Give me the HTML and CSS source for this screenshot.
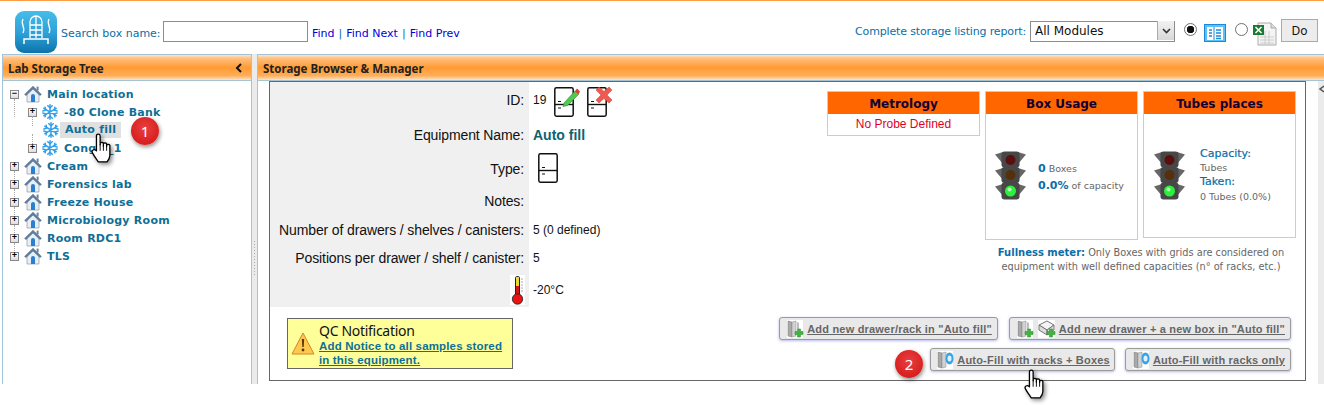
FILE: index.html
```html
<!DOCTYPE html>
<html lang="en">
<head>
<meta charset="utf-8">
<title>Storage Browser &amp; Manager</title>
<link rel="stylesheet" href="styles.css">
</head>
<body>
<svg class="defs" width="0" height="0" aria-hidden="true">
  <defs>
    <symbol id="house" viewBox="0 0 18 18">
      <path d="M3 8.500V17h12V8.500L9 3z" fill="#e8eef4" stroke="#8a9bad" stroke-width=".7"/>
      <path d="M.6 9.400 9 1.200l8.400 8.200-1.400 1.200L9 3.900 2 10.600z" fill="#5f7f9f" stroke="#3f5f7f" stroke-width=".5"/>
      <rect x="12.600" y="1.600" width="2" height="4" fill="#6f8399"/>
      <path d="M7 17v-6a2 2 0 0 1 4 0v6z" fill="#2a7fd0"/>
    </symbol>
    <symbol id="flake" viewBox="0 0 16 16">
      <g stroke="#2f9fe8" stroke-width="1.500" fill="none" stroke-linecap="round">
        <path d="M8 .8v14.400M1.800 4.400l12.400 7.200M14.200 4.400 1.800 11.600"/>
        <path d="M5.800 1.800 8 3.800l2.200-2M5.800 14.200 8 12.200l2.200 2M.9 7l2.800-.9-.6-2.900M15.100 9l-2.800.9.6 2.900M15.100 7l-2.800-.9.6-2.900M.9 9l2.800.9-.6 2.900"/>
      </g>
    </symbol>
    <symbol id="fridge" viewBox="0 0 20 30">
      <rect x=".8" y=".8" width="18.400" height="28.400" rx="1.600" fill="#fff" stroke="#111" stroke-width="1.500"/>
      <path d="M1 17.500h18" stroke="#111" stroke-width="1.400"/>
      <path d="M4 14.500h3M4 21h3" stroke="#111" stroke-width="1.200"/>
    </symbol>
    <symbol id="light" viewBox="0 0 31 49">
      <path d="M0 3.500 8 1v12zM31 3.500 23 1v12zM0 19.500 8 17v12zM31 19.500 23 17v12zM0 35.500 8 33v12zM31 35.500 23 33v12z" fill="#666"/>
      <rect x="6.500" y=".5" width="18" height="16" rx="3" fill="#474747"/>
      <rect x="6.500" y="16" width="18" height="16" rx="3" fill="#474747"/>
      <rect x="6.500" y="31.500" width="18" height="17" rx="3" fill="#474747"/>
      <circle cx="15.500" cy="9" r="5" fill="#5a0f0f"/>
      <circle cx="15.500" cy="24" r="5" fill="#54300c"/>
      <circle cx="15.500" cy="40" r="5.500" fill="#2df03a"/>
      <circle cx="14.500" cy="38.500" r="2" fill="#a8ffb0"/>
    </symbol>
    <symbol id="rack" viewBox="0 0 16 18">
      <path d="M1 1l4 1v15l-4-1z" fill="#a9a9a9" stroke="#777" stroke-width=".5"/>
      <path d="M5 2l4-1v15l-4 1z" fill="#d2d2d2" stroke="#888" stroke-width=".5"/>
      <path d="M10 2l2 1v6h-2z" fill="#bdbdbd"/>
    </symbol>
    <symbol id="plus" viewBox="0 0 10 10">
      <path d="M3.500 1h3v2.500H9v3H6.500V9h-3V6.500H1v-3h2.500z" fill="#3fb53f" stroke="#2a8a2a" stroke-width=".5"/>
    </symbol>
    <symbol id="hand" viewBox="0 0 26 34">
      <path d="M7 20V4a2 2 0 0 1 4 0v9.500-1.500a2 2 0 0 1 3.500 0v3-2.500a2 2 0 0 1 3.500 0v3-1.500a2 2 0 0 1 3.500 0V25c0 3-1.500 5-3 7H9c-2-3-4.500-6-6.500-10-1.200-2.500 1.800-4.500 4.500-2z" fill="#fff" stroke="#000" stroke-width="1.400" stroke-linejoin="round"/>
      <path d="M11 13v7M14.500 14.500V20M18 15.500V20" stroke="#000" stroke-width="1"/>
    </symbol>
  </defs>
</svg>

<header class="toolbar">
  <div class="logo">
    <svg viewBox="0 0 42 42" width="42" height="42" aria-hidden="true">
      <g fill="none" stroke="#fff">
        <path d="M15 27V11a6 6 0 0 1 12 0v16M15 14h12M15 19h12M15 24h12M21 5v22" stroke-width="1.300"/>
        <path d="M9 33v-5h24v5" stroke-width="1.500"/>
        <path d="M8 8c-3 5 3 8 0 14M34 8c-3 5 3 8 0 14" stroke-width="1.300"/>
      </g>
    </svg>
  </div>
  <div class="search">
    <label class="search-label" for="box-name">Search box name:</label>
    <input class="search-input" id="box-name" type="text">
    <nav class="find-links">
      <a href="#">Find</a><span class="sep">|</span><a href="#">Find Next</a><span class="sep">|</span><a href="#">Find Prev</a>
    </nav>
  </div>
  <div class="report">
    <span class="report-label">Complete storage listing report:</span>
    <div class="select-wrap">
      <select class="module-select"><option>All Modules</option></select>
      <span class="select-arrow"><svg width="9" height="6" viewBox="0 0 9 6"><path d="M1 1l3.500 3.500L8 1" fill="none" stroke="#333" stroke-width="1.600"/></svg></span>
    </div>
    <input class="radio" type="radio" name="fmt" checked>
    <svg class="list-icon" width="22" height="18" viewBox="0 0 22 18" aria-hidden="true">
      <rect x=".5" y=".5" width="21" height="17" fill="#5cc0fb" stroke="#1e88d8"/>
      <rect x="3" y="3" width="16" height="13" fill="#fff"/>
      <path d="M10 3v13" stroke="#1e88d8"/>
      <path d="M5 6h3M5 9h3M5 12h3M12 6h5M12 9h5M12 12h5M12 14.500h5" stroke="#1e88d8" stroke-width="1.300"/>
      <path d="M16 1.500h1M18.500 1.500h1" stroke="#f3b33a"/>
    </svg>
    <input class="radio radio-second" type="radio" name="fmt">
    <svg class="xls-icon" width="24" height="24" viewBox="0 0 24 24" aria-hidden="true">
      <path d="M5 1h13l5 5v17H5z" fill="#f4f4f4" stroke="#aaa"/>
      <path d="M18 1v5h5" fill="#ddd" stroke="#aaa"/>
      <path d="M7 15h14M7 18h14M7 21h14M12 9v13M16 9v13" stroke="#ccc"/>
      <rect x="0" y="3" width="11" height="10" fill="#1a7a33"/>
      <path d="M2.500 5l6 6M8.500 5l-6 6" stroke="#fff" stroke-width="1.500"/>
    </svg>
    <button class="do-btn" type="button">Do</button>
  </div>
</header>

<main class="panels">
  <section class="panel tree-panel">
    <h2 class="panel-head">Lab Storage Tree
      <svg class="collapse" width="8" height="10" viewBox="0 0 8 10" aria-hidden="true"><path d="M6 1 2 5l4 4" fill="none" stroke="#111" stroke-width="2"/></svg>
    </h2>
    <ul class="tree">
      <li class="node top open"><span class="exp">&minus;</span><svg class="ico-house"><use href="#house"/></svg><a>Main location</a></li>
      <li class="node sub"><span class="exp">+</span><svg class="ico-flake"><use href="#flake"/></svg><a>-80 Clone Bank</a></li>
      <li class="node sub leaf"><svg class="ico-flake"><use href="#flake"/></svg><a class="selected">Auto fill</a></li>
      <li class="node sub last"><span class="exp">+</span><svg class="ico-flake"><use href="#flake"/></svg><a>Congel_1</a></li>
      <li class="node top"><span class="exp">+</span><svg class="ico-house"><use href="#house"/></svg><a>Cream</a></li>
      <li class="node top"><span class="exp">+</span><svg class="ico-house"><use href="#house"/></svg><a>Forensics lab</a></li>
      <li class="node top"><span class="exp">+</span><svg class="ico-house"><use href="#house"/></svg><a>Freeze House</a></li>
      <li class="node top"><span class="exp">+</span><svg class="ico-house"><use href="#house"/></svg><a>Microbiology Room</a></li>
      <li class="node top"><span class="exp">+</span><svg class="ico-house"><use href="#house"/></svg><a>Room RDC1</a></li>
      <li class="node top"><span class="exp">+</span><svg class="ico-house"><use href="#house"/></svg><a>TLS</a></li>
    </ul>
  </section>

  <div class="splitter"><span class="grip"></span></div>

  <section class="panel browser-panel">
    <h2 class="panel-head">Storage Browser &amp; Manager</h2>
    <div class="browser-body">
      <div class="equipment">
        <div class="left-col">
          <div class="info">
            <div class="lbl">ID:</div>
            <div class="val">19
              <svg class="fridge fridge-edit" viewBox="0 0 26 30" width="26" height="30" aria-hidden="true">
                <use href="#fridge" width="20" height="30"/>
                <path d="M10 16 21 4l3.500 3.500-11 11-4.500 1z" fill="#4fc94f" stroke="#2a8a2a" stroke-width=".6"/>
                <path d="M21 4l2-2.500 3 3L24.500 7.500z" fill="#e23b3b"/>
              </svg>
              <svg class="fridge" viewBox="0 0 26 30" width="26" height="30" aria-hidden="true">
                <use href="#fridge" width="20" height="30"/>
                <path d="M9 3l3-3 5 4.500L22 0l3 3-5 5 5 5-3 3-5-4.500L12 16l-3-3 5-5z" fill="#ef5a50" stroke="#c83a30" stroke-width=".5"/>
              </svg>
            </div>
            <div class="lbl">Equipment Name:</div>
            <div class="val val-name">Auto fill</div>
            <div class="lbl">Type:</div>
            <div class="val"><svg class="fridge-type" width="20" height="30" aria-hidden="true"><use href="#fridge"/></svg></div>
            <div class="lbl">Notes:</div>
            <div class="val"></div>
            <div class="lbl">Number of drawers / shelves / canisters:</div>
            <div class="val">5 (0 defined)</div>
            <div class="lbl">Positions per drawer / shelf / canister:</div>
            <div class="val">5</div>
            <div class="lbl">
              <svg class="thermo" width="15" height="30" viewBox="0 0 15 30" aria-hidden="true">
                <rect width="15" height="30" fill="#fff"/>
                <rect x="5" y="1" width="5" height="20" rx="2.500" fill="#222"/>
                <rect x="6" y="2" width="3" height="9" fill="#e8d838"/>
                <rect x="6" y="11" width="3" height="11" fill="#d01818"/>
                <circle cx="7.500" cy="24" r="5.200" fill="#ee1111" stroke="#222" stroke-width=".8"/>
                <path d="M11 4h2M11 7h2M11 10h2M11 13h2M11 16h2" stroke="#aaa"/>
              </svg>
            </div>
            <div class="val">-20°C</div>
          </div>
          <div class="qc">
            <svg class="warn" width="24" height="23" viewBox="0 0 24 23" aria-hidden="true">
              <path d="M12 1 23 22H1z" fill="#fdc94f" stroke="#d9822b" stroke-width="1" stroke-linejoin="round"/>
              <path d="M10.800 7h2.400l-.5 8h-1.400z" fill="#5a3a00"/>
              <circle cx="12" cy="18" r="1.400" fill="#5a3a00"/>
            </svg>
            <div class="qc-text">
              <div class="qc-title">QC Notification</div>
              <a class="qc-link" href="#">Add Notice to all samples stored in this equipment.</a>
            </div>
          </div>
        </div>

        <div class="right-col">
          <div class="meters">
            <article class="meter">
              <h3 class="meter-head">Metrology</h3>
              <p class="no-probe">No Probe Defined</p>
            </article>
            <article class="meter meter-box">
              <h3 class="meter-head">Box Usage</h3>
              <div class="meter-body">
                <svg class="light" width="31" height="49" aria-hidden="true"><use href="#light"/></svg>
                <div class="usage">
                  <div><b>0</b> Boxes</div>
                  <div><b>0.0%</b> of capacity</div>
                </div>
              </div>
            </article>
            <article class="meter meter-tubes">
              <h3 class="meter-head">Tubes places</h3>
              <div class="meter-body tubes-body">
                <svg class="light" width="31" height="49" aria-hidden="true"><use href="#light"/></svg>
                <div class="tubes">
                  <div class="tubes-h">Capacity:</div>
                  <div>Tubes</div>
                  <div class="tubes-h">Taken:</div>
                  <div>0 Tubes (0.0%)</div>
                </div>
              </div>
            </article>
          </div>
          <p class="fullness"><b>Fullness meter:</b> Only Boxes with grids are considered on<br>equipment with well defined capacities (n° of racks, etc.)</p>
          <div class="actions">
            <div class="action-row">
              <a class="btn" href="#">
                <span class="btn-ico"><svg width="16" height="18"><use href="#rack"/></svg><svg class="btn-plus" width="10" height="10"><use href="#plus"/></svg></span>
                <span class="btn-text">Add new drawer/rack in "Auto fill"</span>
              </a>
              <a class="btn" href="#">
                <span class="btn-ico"><svg width="16" height="18"><use href="#rack"/></svg><svg class="btn-plus" width="10" height="10"><use href="#plus"/></svg></span>
                <span class="btn-ico box-ico">
                  <svg width="17" height="16" viewBox="0 0 17 16"><path d="M1 5l8-4 7 4-7 5z" fill="#f4f4f4" stroke="#777"/><path d="M1 5v5l8 5v-5zM16 5v5l-7 5v-5z" fill="#ddd" stroke="#777"/></svg>
                  <svg class="btn-plus" width="10" height="10"><use href="#plus"/></svg>
                </span>
                <span class="btn-text">Add new drawer + a new box in "Auto fill"</span>
              </a>
            </div>
            <div class="action-row row-two">
              <a class="btn btn-tight" href="#">
                <span class="btn-ico"><svg width="16" height="18"><use href="#rack"/></svg><svg class="btn-gear" width="9" height="13" viewBox="0 0 9 13"><ellipse cx="4.500" cy="6.500" rx="4" ry="6" fill="#36a4e6"/><ellipse cx="4.500" cy="6.500" rx="2" ry="3" fill="#dff2ff"/></svg></span>
                <span class="btn-text">Auto-Fill with racks + Boxes</span>
              </a>
              <a class="btn" href="#">
                <span class="btn-ico"><svg width="16" height="18"><use href="#rack"/></svg><svg class="btn-gear" width="9" height="13" viewBox="0 0 9 13"><ellipse cx="4.500" cy="6.500" rx="4" ry="6" fill="#36a4e6"/><ellipse cx="4.500" cy="6.500" rx="2" ry="3" fill="#dff2ff"/></svg></span>
                <span class="btn-text">Auto-Fill with racks only</span>
              </a>
            </div>
          </div>
        </div>
      </div>
      <div class="scroll-strip"><svg width="6" height="8" viewBox="0 0 6 8"><path d="M6 1 2 4l4 3" fill="none" stroke="#555" stroke-width="1.500"/></svg></div>
    </div>
  </section>
</main>

<span class="badge badge-one">1</span>
<span class="badge badge-two">2</span>
<svg class="cursor cursor-one" width="24" height="32" aria-hidden="true"><use href="#hand"/></svg>
<svg class="cursor cursor-two" width="24" height="32" aria-hidden="true"><use href="#hand"/></svg>
</body>
</html>
```

FILE: styles.css
```css
* { box-sizing: border-box; }
html, body { margin: 0; height: 405px; overflow: hidden; background: #fff; }
body { position: relative; font-family: "DejaVu Sans", Verdana, sans-serif; border-top: 1px solid #ff9c45; color: #111; }
.defs { position: absolute; }
h2, h3, p, ul { margin: 0; padding: 0; }
a { text-decoration: none; }

/* toolbar */
.toolbar { height: 53px; display: flex; align-items: flex-start; padding-left: 15px; }
.logo { width: 42px; height: 42px; margin-top: 10px; border-radius: 9px; background: linear-gradient(#45bde9, #2c9fd6 55%, #0d74aa); }
.search { display: flex; align-items: center; margin: 20px 0 0 4px; height: 21px; font-size: 11px; }
.search-label { color: #0a6ea8; width: 102px; white-space: nowrap; padding-top: 3px; }
.search-input { width: 145px; height: 21px; border: 1px solid #8d8d8d; padding: 0; background: #fff; }
.find-links { display: flex; margin-left: 4px; padding-top: 3px; white-space: nowrap; }
.find-links a { color: #00d; }
.sep { color: #0a6ea8; margin: 0 4px; }
.report { margin-left: auto; display: flex; align-items: flex-start; margin-right: 6px; height: 30px; margin-top: 18px; }
.report-label { font-size: 11px; letter-spacing: -.15px; color: #0a6ea8; white-space: nowrap; margin: 6px 4px 0 0; }
.select-wrap { position: relative; width: 145px; height: 21px; margin-top: 1px; }
.module-select { appearance: none; width: 100%; height: 100%; border: 1px solid #8d8d8d; background: #fff; padding: 0 0 0 4px; font: 12px "DejaVu Sans", sans-serif; color: #111; border-radius: 0; }
.select-arrow { position: absolute; right: 1px; top: 1px; bottom: 1px; width: 17px; background: linear-gradient(#f2f2f2, #d8d8d8); border-left: 1px solid #aaa; display: flex; align-items: center; justify-content: center; }
.radio { appearance: none; width: 13px; height: 13px; margin: 4px 0 0 9px; border: 1px solid #6f6f6f; border-radius: 50%; background: #fff; flex: none; }
.radio:checked { background: radial-gradient(circle, #111 0 3.500px, #fff 4px); }
.list-icon { margin: 5px 0 0 7px; flex: none; }
.xls-icon { margin: 3px 0 0 5px; flex: none; }
.do-btn { width: 37px; height: 23px; margin-left: 4px; border: 1px solid #aaa; background: #ececec; font: 12px "Noto Sans", sans-serif; color: #111; padding: 0; }

/* panels */
.panels { display: flex; height: 330px; padding-left: 2px; }
.panel { border: 1px solid #a3c3d9; border-bottom: 0; }
.tree-panel { width: 250px; flex: none; }
.browser-panel { flex: 1; min-width: 0; border-right: 0; }
.splitter { width: 5px; flex: none; background: #ebebeb; }
.grip { display: block; width: 3px; height: 36px; margin: 186px 1px 0; background: radial-gradient(circle, #aaa 0 .7px, transparent 1px) 0 0 / 3px 3px; }
.panel-head { position: relative; height: 26px; padding: 1px 0 0 5px; border-bottom: 1px solid #a3c3d9; font: 700 11.500px/25px "Noto Sans", sans-serif; color: #222; background: linear-gradient(#ffe3c4 0, #ffbf80 14%, #ff9b33 50%, #ffad57 82%, #ffe3c4 100%); white-space: nowrap; }
.collapse { position: absolute; right: 8px; top: 8px; }

/* tree */
.tree { list-style: none; padding-top: 4px; }
.node { position: relative; display: flex; align-items: center; height: 18px; font-size: 11px; font-weight: 700; letter-spacing: .25px; white-space: nowrap; }
.node a { color: #0f6f96; }
.node.top { padding-left: 7px; }
.node.sub { padding-left: 25px; }
.node.leaf { padding-left: 40px; }
.exp { width: 9px; height: 9px; flex: none; border: 1px solid #888; background: linear-gradient(#fff, #ddd); font: 700 9px/7px "Liberation Mono", monospace; text-align: center; color: #000; margin-right: 5px; letter-spacing: 0; }
.node::before { content: ""; position: absolute; border-left: 1px dotted #aaa; left: 11px; top: 14px; height: 18px; }
.node.sub::before { left: 29px; top: 13px; height: 10px; }
.node.last::before { display: none; }
.node.top:last-child::before { display: none; }
.ico-house { width: 18px; height: 18px; flex: none; margin-right: 5px; }
.ico-flake { width: 16px; height: 16px; flex: none; margin-right: 6px; }
.node .selected { background: #e0e0e0; padding: 2px 5px 2px 5px; margin-left: -5px; line-height: 12px; }

/* browser */
.browser-body { display: flex; padding-left: 11px; height: 303px; }
.equipment { width: 1037px; height: 300px; flex: none; border: 1px solid #666; display: flex; justify-content: space-between; }
.left-col { width: 330px; }
.info { display: grid; grid-template-columns: 259px 1fr; grid-template-rows: 36px 34px 33px 32px 26px 30px 34px; }
.lbl { background: #f0f0f0; display: flex; align-items: center; justify-content: flex-end; padding-right: 5px; font: 14px "Liberation Sans", sans-serif; letter-spacing: -.12px; white-space: nowrap; }
.val { display: flex; align-items: center; padding-left: 4px; font: 12px "Liberation Sans", sans-serif; white-space: nowrap; }
.val-name { font-weight: 700; font-size: 14px; color: #0b6472; }
.fridge { margin: 3px 0 0 6px; flex: none; }
.fridge-edit { margin-left: 8px; margin-right: 1px; }
.fridge-type { margin-left: 5px; margin-top: -2px; }
.thermo { margin-right: -1px; }
.qc { width: 226px; height: 51px; margin: 11px 0 0 17px; display: flex; border: 1px solid #666; background: #ff9; }
.warn { margin: 13px 0 0 3px; flex: none; }
.qc-text { margin-left: 4px; width: 186px; }
.qc-title { font: 14px/17px "Noto Sans", sans-serif; margin-top: 3px; letter-spacing: -.3px; }
.qc-link { display: block; font: 700 11.500px/14px "Liberation Sans", sans-serif; letter-spacing: .15px; color: #0f6f96; text-decoration: underline; }

.right-col { display: flex; flex-direction: column; align-items: flex-end; padding: 9px 9px 0 0; }
.meters { display: flex; gap: 5px; align-items: flex-start; }
.meter { width: 153px; border: 1px solid #ccc; background: #fff; }
.meter-head { height: 22px; background: #f60; font-size: 12px; line-height: 24px; text-align: center; font-weight: 700; color: #110033; }
.no-probe { font: 12px/21px "Liberation Sans", sans-serif; color: #e00024; text-align: center; }
.meter-box { height: 149px; }
.meter-tubes { height: 147px; }
.meter-body { display: flex; align-items: center; padding: 37px 0 0 9px; color: #666; font-size: 9.500px; }
.usage { margin: 3px 0 0 12px; line-height: 17px; white-space: nowrap; }
.usage b { color: #0a6ea8; font-size: 11px; }
.tubes-body { padding-left: 10px; padding-top: 37px; align-items: flex-start; }
.tubes { margin: -4px 0 0 15px; line-height: 14.200px; white-space: nowrap; }
.tubes-h { color: #0a6ea8; font-size: 11px; -webkit-text-stroke: .2px #0a6ea8; }
.fullness { width: 310px; margin: 6px 0 0; font-size: 9.750px; line-height: 14px; color: #666; text-align: center; white-space: nowrap; }
.fullness b { color: #0a6ea8; font-size: 10px; }
.actions { display: flex; flex-direction: column; align-items: flex-end; margin: 43px 5px 0 0; gap: 8px; }
.action-row { display: flex; gap: 11px; }
.row-two { gap: 10px; }
.btn { display: flex; align-items: center; height: 23px; padding: 0 5px 0 7px; border: 1px solid #9a9a9a; border-radius: 3px; background: #e9e9e9; box-shadow: 0 1px 3px #b9b9ee; font: 700 11px "Liberation Sans", sans-serif; color: #666; white-space: nowrap; }
.btn-tight { padding-left: 6px; padding-right: 4px; }
.btn-text { text-decoration: underline; margin-left: 4px; letter-spacing: .2px; }
.btn-ico { position: relative; display: flex; width: 16px; height: 18px; background: #fff; }
.box-ico { width: 17px; margin-left: 5px; }
.btn-plus { position: absolute; right: -1px; bottom: 0; }
.btn-gear { position: absolute; right: -1px; top: 1px; }
.scroll-strip { flex: 1; margin-left: 12px; background: #ebebeb; padding-top: 4px; }
.scroll-strip svg { display: block; }

/* overlays */
.badge { position: absolute; width: 28px; height: 28px; border-radius: 50%; background: radial-gradient(circle at 50% 40%, #e84040, #d81f1f 70%, #f03030); box-shadow: 1px 2px 4px rgba(0,0,0,.45); color: #fff; font: 15px/28px "Noto Sans", sans-serif; text-align: center; }
.badge-one { left: 131px; top: 116px; }
.badge-two { left: 895px; top: 349px; }
.cursor { position: absolute; filter: drop-shadow(2px 2px 2px rgba(0,0,0,.45)); }
.cursor-one { left: 90px; top: 131px; }
.cursor-two { left: 1023px; top: 367px; }
```
